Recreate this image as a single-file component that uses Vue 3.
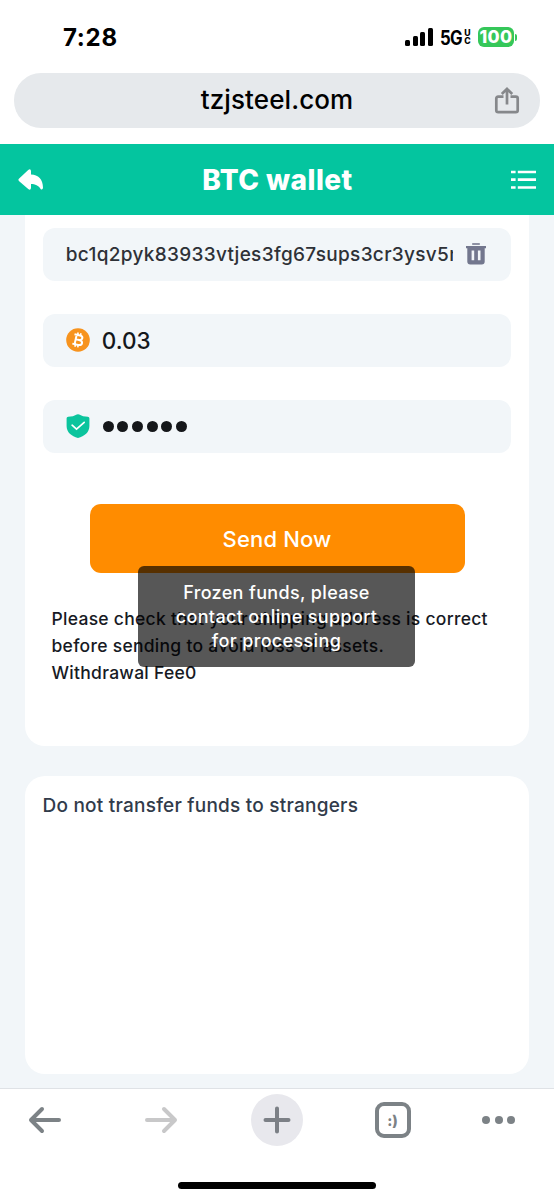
<script setup>
const address = 'bc1q2pyk83933vtjes3fg67sups3cr3ysv5n'
const amount = '0.03'
const bars = [6, 10, 14, 18]
const pinLength = 6
</script>

<template>
  <div class="phone">
    <header class="status">
      <span class="time">7:28</span>
      <div class="indicators">
        <div class="signal">
          <i v-for="h in bars" :key="h" :style="{ height: h + 'px' }"></i>
        </div>
        <span class="network">5G</span>
        <span class="uc"><b>U</b><b>C</b></span>
        <span class="battery">100</span>
        <i class="battery-tip"></i>
      </div>
    </header>

    <div class="url-row">
      <div class="url-bar">
        <span class="url">tzjsteel.com</span>
        <svg class="share" width="26" height="28" viewBox="0 0 26 28" fill="none" stroke="#86888b" stroke-width="2.7">
          <path d="M9.5 9.7H4.2Q2.3 9.7 2.3 11.6V23.2Q2.3 25.1 4.2 25.1H21.8Q23.7 25.1 23.7 23.2V11.6Q23.7 9.7 21.8 9.7H16.5" />
          <path d="M13 17.5V2.5M7.8 7L13 1.9L18.2 7" />
        </svg>
      </div>
    </div>

    <nav class="title-bar">
      <svg class="reply" width="26" height="22" viewBox="0 0 26 22" fill="#fff">
        <path d="M10.2 1.1Q12.6-.8 13 1.9V5.6C20.4 6 24.8 10.1 25 18.5Q25 20.8 23 20.4C20.4 16.4 17.3 15 13 15V18.9Q12.6 21.8 10.2 20L.9 11.9Q-.1 10.8.9 9.7Z" />
      </svg>
      <h1>BTC wallet</h1>
      <svg class="menu" width="25" height="20" viewBox="0 0 25 20" stroke="#fff" stroke-width="2.7">
        <path d="M0 2H4.6M6.8 2H25M0 9.6H4.6M6.8 9.6H25M0 17.5H4.6M6.8 17.5H25" />
      </svg>
    </nav>

    <main class="content">
      <section class="card form-card">
        <div class="field address-field">
          <span class="address">{{ address }}</span>
          <svg class="trash" width="20" height="22" viewBox="0 0 20 22">
            <path d="M6.2 1H13.8" stroke="#73778e" stroke-width="1.6" />
            <path fill="#73778e" fill-rule="evenodd" d="M0 3H20V5.3H18.7V18.4Q18.7 21.4 15.7 21.4H4.3Q1.3 21.4 1.3 18.4V5.3H0ZM5.6 7.6V17.2H8.2V7.6ZM11.9 7.6V17.2H14.5V7.6Z" />
          </svg>
        </div>
        <div class="field">
          <svg class="field-icon" width="24" height="24" viewBox="0 0 24 24">
            <circle cx="12" cy="12" r="11.8" fill="#f7931e" />
            <g transform="rotate(13 12 12)" fill="none" stroke="#fff" stroke-width="2">
              <path d="M7.3 7.2H13Q15.8 7.2 15.8 9.4T13 11.7H9.3M13 11.7Q16.6 11.7 16.6 14.2T13.2 16.8H7.3M9.6 7.2V16.8" />
              <path d="M10.5 4.7V7M13.4 4.7V7M10.5 17V19.3M13.4 17V19.3" stroke-width="1.6" />
            </g>
          </svg>
          <span class="amount">{{ amount }}</span>
        </div>
        <div class="field">
          <svg class="field-icon" width="24" height="24" viewBox="0 0 24 24">
            <path fill="#0bc49d" d="M10.8.5Q12-.2 13.2.5Q16.7 2.7 21.8 2.7Q23.4 2.8 23.4 4.3V12C23.4 18.5 18.5 22 12 24C5.5 22 .6 18.5.6 12V4.3Q.6 2.8 2.2 2.7Q7.3 2.7 10.8.5Z" />
            <path d="M6.1 11.2L10.5 15.1L18.2 8.3" fill="none" stroke="#fff" stroke-width="1.7" stroke-linecap="round" />
          </svg>
          <div class="pin"><i v-for="n in pinLength" :key="n"></i></div>
        </div>
        <button class="send">Send Now</button>
        <div class="notice">
          <p>Please check that your shipping address is correct</p>
          <p>before sending to avoid loss of assets.</p>
          <p>Withdrawal Fee0</p>
        </div>
      </section>
      <section class="card warn-card"><span class="warning">Do not transfer funds to strangers</span></section>
    </main>

    <footer class="toolbar">
      <div class="tools">
        <svg class="back" width="34" height="28" viewBox="0 0 34 28" fill="none" stroke="#7c8286" stroke-width="4" stroke-linecap="round" stroke-linejoin="round">
          <path d="M31 14H3M14 3L3 14L14 25" />
        </svg>
        <svg class="forward" width="34" height="28" viewBox="0 0 34 28" fill="none" stroke="#c8c8c9" stroke-width="4" stroke-linecap="round" stroke-linejoin="round">
          <path d="M3 14H31M20 3L31 14L20 25" />
        </svg>
        <div class="plus">
          <svg width="28" height="28" viewBox="0 0 28 28" fill="none" stroke="#7c8086" stroke-width="4" stroke-linecap="round">
            <path d="M2.5 14H25.5M14 2.5V25.5" />
          </svg>
        </div>
        <div class="tab"><span>:)</span></div>
        <div class="more"><i></i><i></i><i></i></div>
      </div>
      <div class="home"></div>
    </footer>

    <div class="toast">
      <span>Frozen funds, please</span>
      <span>contact online support</span>
      <span>for processing</span>
    </div>
  </div>
</template>

<style>
body { margin: 0; background: #fff; }
</style>

<style scoped>
* { box-sizing: border-box; }
.phone {
  position: relative;
  width: 554px;
  height: 1200px;
  overflow: hidden;
  display: flex;
  flex-direction: column;
  background: #fff;
  font-family: Inter, "Liberation Sans", sans-serif;
  white-space: nowrap;
}
.status {
  height: 73px;
  flex: none;
  display: flex;
  justify-content: space-between;
  padding: 0 37px 0 63px;
}
.time { font-size: 24px; line-height: 28px; font-weight: 700; letter-spacing: .7px; margin-top: 24px; }
.indicators { display: flex; height: 20px; margin-top: 27px; align-items: center; }
.signal { display: flex; align-items: flex-end; gap: 2.6px; height: 18px; margin-right: 7px; }
.signal i { width: 5px; border-radius: 1.5px; background: #000; }
.network {
  width: 24px; font-size: 19.5px; font-weight: 700; letter-spacing: -.7px; margin-top: 1px;
  transform: scaleX(.86); transform-origin: 0 50%;
}
.uc { width: 7px; display: flex; flex-direction: column; margin-right: 7px; align-items: center; }
.uc b { font-size: 8.7px; line-height: 8px; font-weight: 800; }
.battery {
  width: 36px; height: 20px; border-radius: 6px; background: #35c759; color: #fff;
  font-size: 17.5px; line-height: 20px; font-weight: 800; text-align: center; letter-spacing: .3px;
}
.battery-tip { width: 2px; height: 7px; margin-left: 1px; border-radius: 0 3px 3px 0; background: #35c759; }
.url-row { height: 70.5px; flex: none; padding: 0 14px; }
.url-bar {
  position: relative; height: 54.5px; border-radius: 27px; background: #e6e9ec;
  display: flex; align-items: center; justify-content: center;
}
.url { font-size: 26px; font-weight: 500; line-height: 32px; letter-spacing: .1px; }
.share { position: absolute; right: 20px; top: 14px; }
.title-bar {
  height: 71px; flex: none; background: #04c59f; display: flex; align-items: center;
  justify-content: space-between; padding: 0 18px;
}
h1 { margin: 2px 0 0; font-size: 28px; line-height: 36px; font-weight: 800; letter-spacing: .45px; color: #fff; }
.reply { margin-top: 1px; }
.menu { margin-top: 2px; }
.content { flex: 1; min-height: 0; background: #f2f6f9; padding: 0 25px 0 24.5px; overflow: hidden; }
.card { background: #fff; }
.form-card { height: 531.5px; border-radius: 0 0 20px 20px; padding: 13.5px 18px 0; }
.field {
  height: 52.5px; border-radius: 12px; background: #f2f6f9; display: flex;
  align-items: center; padding: 0 24.7px 0 23.3px; margin-bottom: 33.5px;
}
.address-field { justify-content: space-between; }
.address {
  width: 387.5px; overflow: hidden; font-size: 19px; line-height: 28px; font-weight: 500;
  letter-spacing: .32px; color: #2e3137; padding-top: 1px;
}
.field-icon { margin-right: 12px; flex: none; }
.amount { font-size: 22.5px; font-weight: 500; color: #15181c; margin-top: 1px; }
.pin { display: flex; gap: 3.6px; padding-left: 1px; margin-top: 1px; }
.pin i { width: 11px; height: 11px; border-radius: 50%; background: #15171a; }
.send {
  display: block; width: 375px; height: 69px; margin: 51.5px 0 0 47px; border: 0; border-radius: 11px;
  background: #ff8c00; color: #fff; font: 500 22px/30px Inter, sans-serif; letter-spacing: .15px; padding: 0;
}
.notice { margin: 31.5px 0 0 9px; color: #171a24; font-size: 17.5px; font-weight: 500; line-height: 27px; letter-spacing: .28px; }
.notice p { margin: 0; }
.warn-card { height: 298.5px; margin-top: 29.5px; border-radius: 20px; padding: 16px 18px; }
.warning { font-size: 19px; line-height: 28px; font-weight: 500; color: #313b4a; letter-spacing: .23px; }
.toolbar { height: 112px; flex: none; border-top: 1.5px solid #dfe2e6; background: #fff; }
.tools { height: 62px; display: flex; align-items: center; padding-left: 28px; }
.forward { margin-left: 82px; }
.plus {
  width: 52px; height: 52px; margin-left: 73px; border-radius: 50%; background: #e8e8ed;
  display: flex; align-items: center; justify-content: center;
}
.tab {
  width: 36px; height: 36px; margin-left: 71.5px; border: 4px solid #7c8286; border-radius: 9px; color: #7c8286;
  display: flex; align-items: center; justify-content: center; font-size: 14.5px; font-weight: 800;
}
.tab span { margin-top: 1px; }
.more { display: flex; gap: 4.7px; margin-left: 71.5px; }
.more i { width: 8px; height: 8px; border-radius: 50%; background: #7c8286; }
.home { width: 198px; height: 7px; margin: 30.5px 0 0 178px; border-radius: 4px; background: #000; }
.toast {
  position: absolute; left: 138px; top: 566px; width: 277px; height: 101px; border-radius: 6px;
  padding-top: 15px; background: rgba(0, 0, 0, .66); color: #fff; display: flex;
  flex-direction: column; align-items: center; font-size: 18px; line-height: 24px; font-weight: 500;
  letter-spacing: .35px;
}
</style>
